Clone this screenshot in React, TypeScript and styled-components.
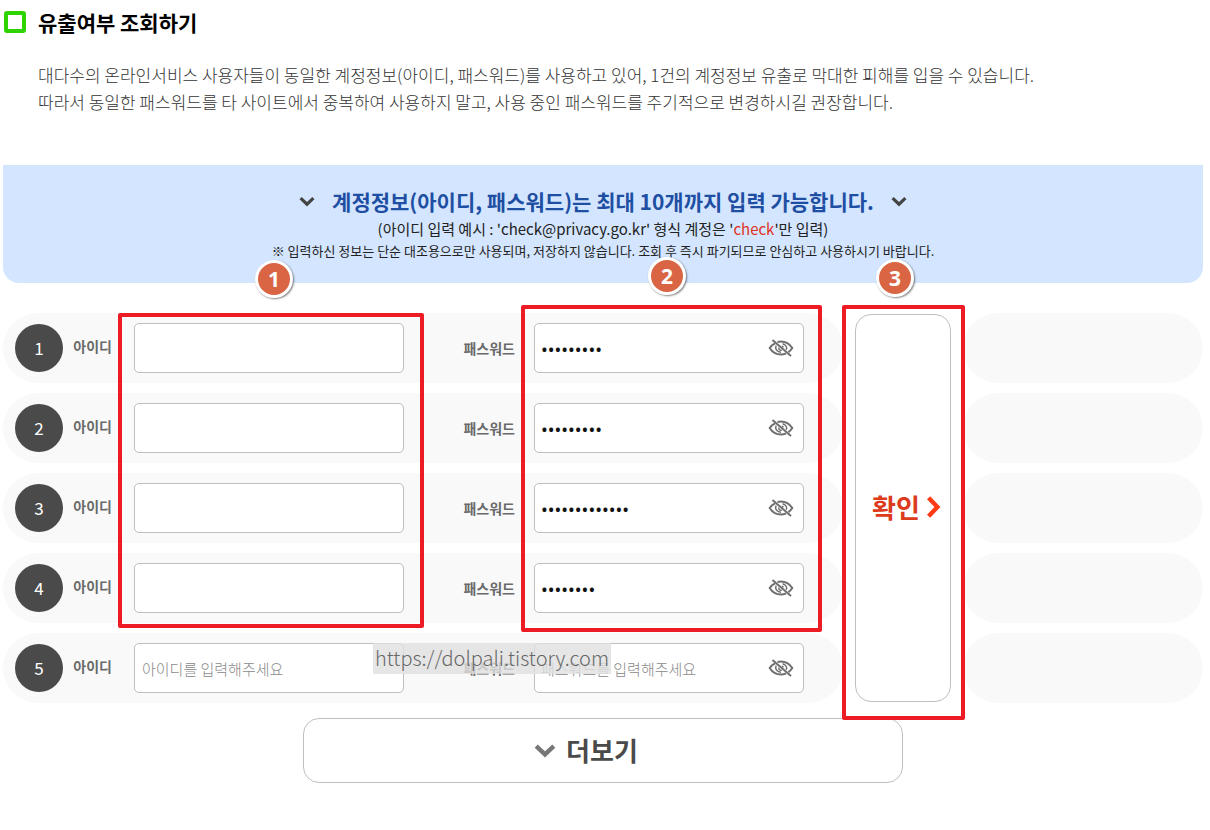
import React, { useId } from 'react';
import styled, { createGlobalStyle } from 'styled-components';

const GlobalStyle = createGlobalStyle`
  *, *::before, *::after { box-sizing: border-box; }
  body {
    margin: 0;
    background: #fff;
    color: #000;
    font-family: "Noto Sans CJK KR", "Noto Sans", sans-serif;
  }
  h1, h2, p { margin: 0; }
  button, input { font-family: inherit; }
`;

const Page = styled.main`
  padding: 8px 7px 47px 3px;
`;

const TitleRow = styled.header`
  display: flex;
  align-items: center;
  gap: 12px;
  height: 28px;
  padding-left: 1px;
`;

const TitleMark = styled.span`
  width: 22px;
  height: 22px;
  border: 4px solid #2fd400;
  border-radius: 3px;
`;

const Title = styled.h1`
  font-size: 21px;
  font-weight: 700;
  line-height: 28px;
`;

const Intro = styled.p`
  margin: 25px 0 0 35px;
  color: #333;
  font-size: 17px;
  font-weight: 300;
  line-height: 27px;
`;

const Line = styled.span`
  display: block;
`;

const Banner = styled.section`
  display: flex;
  flex-direction: column;
  align-items: center;
  height: 118px;
  margin-top: 50px;
  padding-top: 20px;
  border-radius: 0 0 16px 16px;
  background: #d4e6ff;
  text-align: center;
`;

const BannerTitle = styled.h2`
  display: flex;
  align-items: center;
  gap: 17px;
  color: #1e4fa3;
  font-size: 21px;
  font-weight: 700;
  line-height: 32px;
`;

const BannerExample = styled.p`
  color: #222;
  font-size: 15px;
  line-height: 24px;
`;

const BannerNote = styled.p`
  color: #222;
  font-size: 13px;
  line-height: 20px;
`;

const Accent = styled.em`
  color: #e0311c;
  font-style: normal;
`;

const Form = styled.form`
  margin-top: 30px;
`;

const Columns = styled.div`
  position: relative;
  display: grid;
  grid-template-columns: minmax(0, 7fr) 120px minmax(0, 2fr);
`;

const RowStack = styled.div`
  display: flex;
  flex-direction: column;
  gap: 10px;
`;

const Pill = styled.div`
  display: flex;
  align-items: center;
  height: 70px;
  padding: 0 12px;
  border-radius: 35px;
  background: #f9f9f9;
`;

const RowNumber = styled.span`
  flex: none;
  width: 48px;
  border-radius: 50%;
  background: #4a4a4a;
  color: #fff;
  font-size: 17px;
  line-height: 48px;
  text-align: center;
`;

const FieldLabel = styled.label<{ $wide?: boolean }>`
  flex: none;
  width: ${(p) => (p.$wide ? 130 : 71)}px;
  padding: ${(p) => (p.$wide ? '0 19px 0 0' : '0 22px 4px 0')};
  color: #6a6a6a;
  font-size: 14px;
  font-weight: 700;
  line-height: 20px;
  text-align: right;
`;

const Field = styled.span`
  display: flex;
  align-items: center;
  flex: none;
  width: 270px;
  height: 50px;
  border: 1px solid #bfbfbf;
  border-radius: 5px;
  background: #fff;
`;

const TextInput = styled.input`
  flex: 1;
  min-width: 0;
  height: 48px;
  padding: 0 7px;
  border: 0;
  outline: 0;
  background: none;
  color: #111;
  font-size: 15px;
  font-weight: 300;
  &::placeholder { color: #888; opacity: 1; }
`;

const PasswordInput = styled(TextInput)`
  padding: 0 6px;
  &:not(:placeholder-shown) {
    padding-top: 2px;
    font-family: "Noto Sans", sans-serif;
    font-size: 18px;
    font-weight: 400;
  }
`;

const EyeButton = styled.button`
  display: flex;
  flex: none;
  margin-right: 9px;
  padding: 0;
  border: 0;
  background: none;
  color: #6f6f6f;
`;

const ConfirmColumn = styled.div`
  position: relative;
  display: flex;
  padding: 1px 12px;
`;

const OutlineButton = styled.button`
  display: flex;
  align-items: center;
  justify-content: center;
  border: 1px solid #bfbfbf;
  border-radius: 16px;
  background: #fff;
  color: #4a4a4a;
  font-size: 26px;
  font-weight: 700;
  line-height: 36px;
`;

const ConfirmButton = styled(OutlineButton)`
  flex: 1;
  gap: 2px;
  padding: 0 0 2px 10px;
  color: #dd3a1c;
  white-space: nowrap;
`;

const MoreButton = styled(OutlineButton)`
  gap: 10px;
  width: 600px;
  max-width: 100%;
  height: 65px;
  margin: 15px auto 0;
  padding: 0 34px 2px 0;
`;

const Highlight = styled.div<{ $x: number; $y: number; $w: number; $h: number }>`
  position: absolute;
  left: ${(p) => p.$x}px;
  top: ${(p) => p.$y}px;
  width: ${(p) => p.$w}px;
  height: ${(p) => p.$h}px;
  border: 4px solid #ed1c24;
  border-radius: 2px;
  pointer-events: none;
`;

const Badge = styled.span<{ $x: number; $y: number }>`
  position: absolute;
  left: ${(p) => p.$x}px;
  top: ${(p) => p.$y}px;
  width: 38px;
  height: 38px;
  border: 3px solid #fff;
  border-radius: 50%;
  background: #d96544;
  box-shadow: 1px 1px 2px rgba(0, 0, 0, 0.5);
  color: #fff;
  font-family: "Open Sans", sans-serif;
  font-size: 21px;
  font-weight: 700;
  line-height: 32px;
  text-align: center;
`;

const Watermark = styled.span`
  position: absolute;
  left: 370px;
  top: 330px;
  height: 31px;
  padding: 0 2px;
  background: rgba(224, 224, 224, 0.8);
  color: #666;
  font-size: 20px;
  font-weight: 300;
  line-height: 30px;
  pointer-events: none;
`;

type Direction = 'down' | 'right';

function Chevron({ size, color, direction = 'down' }: { size: number; color: string; direction?: Direction }) {
  return (
    <svg width={size} height={size} viewBox="0 0 20 20" aria-hidden="true">
      <path
        d={direction === 'down' ? 'M2 6.5 10 14l8-7.5' : 'M6 1.5 14 10l-8 8.5'}
        fill="none"
        stroke={color}
        strokeWidth="4"
      />
    </svg>
  );
}

function EyeOff() {
  return (
    <svg width="26" height="18" viewBox="0 0 26 18" fill="none" stroke="currentColor" aria-hidden="true">
      <path d="M7 4.300C4.600 5.500 3 7.200 1.700 9c2.400 3.900 6.300 6.500 11.300 6.500 1.800 0 3.500-.4 5-1" strokeWidth="2" />
      <path d="M9.500 3c1.100-.3 2.300-.5 3.500-.5 5 0 8.900 2.800 11.300 6.500-1 1.600-2.300 3-3.900 4.100" strokeWidth="2" />
      <path d="M8.200 6.500C6.500 9.800 9 13.200 13 13.200" strokeWidth="1.500" />
      <path d="M14.500 4.800c3.200.6 4.800 3.200 3.800 6M10.800 8.500c-.3 2 1 3.100 3 2.700M14 7.200l1.500 1" strokeWidth="1.400" />
      <path d="M4.500 1 23 17" strokeWidth="2" />
    </svg>
  );
}

const rows = ['•••••••••', '•••••••••', '•••••••••••••', '••••••••', ''];

function AccountRow({ index, password }: { index: number; password: string }) {
  const id = useId();
  const filled = password !== '';
  return (
    <Pill>
      <RowNumber>{index}</RowNumber>
      <FieldLabel htmlFor={`${id}-user`}>아이디</FieldLabel>
      <Field>
        <TextInput id={`${id}-user`} type="text" placeholder={filled ? '' : '아이디를 입력해주세요'} />
      </Field>
      <FieldLabel $wide htmlFor={`${id}-pass`}>패스워드</FieldLabel>
      <Field>
        <PasswordInput
          id={`${id}-pass`}
          type="password"
          autoComplete="off"
          defaultValue={password}
          placeholder="패스워드를 입력해주세요"
        />
        <EyeButton type="button" aria-label="패스워드 보기">
          <EyeOff />
        </EyeButton>
      </Field>
    </Pill>
  );
}

export default function App() {
  return (
    <>
      <GlobalStyle />
      <Page>
        <TitleRow>
          <TitleMark />
          <Title>유출여부 조회하기</Title>
        </TitleRow>
        <Intro>
          <Line>
            대다수의 온라인서비스 사용자들이 동일한 계정정보(아이디, 패스워드)를 사용하고 있어, 1건의 계정정보 유출로 막대한 피해를 입을 수 있습니다.
          </Line>
          <Line>
            따라서 동일한 패스워드를 타 사이트에서 중복하여 사용하지 말고, 사용 중인 패스워드를 주기적으로 변경하시길 권장합니다.
          </Line>
        </Intro>
        <Banner>
          <BannerTitle>
            <Chevron size={16} color="#444" />
            계정정보(아이디, 패스워드)는 최대 10개까지 입력 가능합니다.
            <Chevron size={16} color="#444" />
          </BannerTitle>
          <BannerExample>
            (아이디 입력 예시 : 'check@privacy.go.kr' 형식 계정은 '<Accent>check</Accent>'만 입력)
          </BannerExample>
          <BannerNote>
            ※ 입력하신 정보는 단순 대조용으로만 사용되며, 저장하지 않습니다. 조회 후 즉시 파기되므로 안심하고 사용하시기 바랍니다.
          </BannerNote>
        </Banner>
        <Form onSubmit={(e) => e.preventDefault()}>
          <Columns>
            <RowStack>
              {rows.map((password, i) => (
                <AccountRow key={i} index={i + 1} password={password} />
              ))}
            </RowStack>
            <ConfirmColumn>
              <ConfirmButton type="submit">
                확인
                <Chevron size={22} color="#ff3a17" direction="right" />
              </ConfirmButton>
              <Highlight $x={-1} $y={-8} $w={123} $h={415} />
              <Badge $x={33} $y={-54}>3</Badge>
            </ConfirmColumn>
            <RowStack>
              {rows.map((_, i) => (
                <Pill key={i} />
              ))}
            </RowStack>
            <Highlight $x={115} $y={0} $w={306} $h={315} />
            <Badge $x={252} $y={-53}>1</Badge>
            <Highlight $x={518} $y={-8} $w={301} $h={327} />
            <Badge $x={645} $y={-56}>2</Badge>
            <Watermark>https://dolpali.tistory.com</Watermark>
          </Columns>
          <MoreButton type="button">
            <Chevron size={22} color="#777" />
            더보기
          </MoreButton>
        </Form>
      </Page>
    </>
  );
}
